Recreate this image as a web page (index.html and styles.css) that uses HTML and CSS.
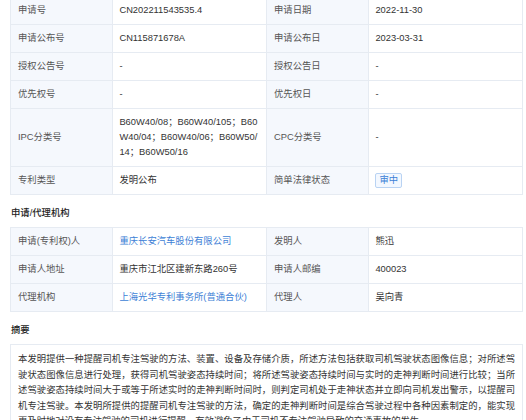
FILE: index.html
```html
<!DOCTYPE html>
<html lang="zh-CN">
<head>
<meta charset="utf-8">
<link rel="stylesheet" href="styles.css">
</head>
<body>
<div class="page">
  <table class="info">
    <colgroup><col class="c-label"><col class="c-value"><col class="c-label"><col class="c-value"></colgroup>
    <tr><th>申请号</th><td>CN202211543535.4</td><th>申请日期</th><td>2022-11-30</td></tr>
    <tr><th>申请公布号</th><td>CN115871678A</td><th>申请公布日</th><td>2023-03-31</td></tr>
    <tr><th>授权公告号</th><td>-</td><th>授权公告日</th><td>-</td></tr>
    <tr><th>优先权号</th><td>-</td><th>优先权日</th><td>-</td></tr>
    <tr><th>IPC分类号</th><td>B60W40/08；B60W40/105；B60W40/04；B60W40/06；B60W50/14；B60W50/16</td><th>CPC分类号</th><td>-</td></tr>
    <tr><th>专利类型</th><td>发明公布</td><th>简单法律状态</th><td><span class="badge">审中</span></td></tr>
  </table>

  <h3 class="section-title">申请/代理机构</h3>
  <table class="info">
    <colgroup><col class="c-label"><col class="c-value"><col class="c-label"><col class="c-value"></colgroup>
    <tr><th>申请(专利权)人</th><td><a class="link">重庆长安汽车股份有限公司</a></td><th>发明人</th><td>熊迅</td></tr>
    <tr><th>申请人地址</th><td>重庆市江北区建新东路260号</td><th>申请人邮编</th><td>400023</td></tr>
    <tr><th>代理机构</th><td><a class="link">上海光华专利事务所(普通合伙)</a></td><th>代理人</th><td>吴向青</td></tr>
  </table>

  <h3 class="section-title">摘要</h3>
  <div class="abstract">本发明提供一种提醒司机专注驾驶的方法、装置、设备及存储介质，所述方法包括获取司机驾驶状态图像信息；对所述驾驶状态图像信息进行处理，获得司机驾驶姿态持续时间；将所述驾驶姿态持续时间与实时的走神判断时间进行比较；当所述驾驶姿态持续时间大于或等于所述实时的走神判断时间时，则判定司机处于走神状态并立即向司机发出警示，以提醒司机专注驾驶。本发明所提供的提醒司机专注驾驶的方法，确定的走神判断时间是综合驾驶过程中各种因素制定的，能实现更及时地对没有专注驾驶的司机进行提醒，有效避免了由于司机不专注驾驶导致的交通事故的发生。</div>
</div>
</body>
</html>
```
FILE: styles.css
```css
html, body {
  margin: 0;
  padding: 0;
  background: #ffffff;
}
body {
  font-family: "Liberation Sans", "Noto Sans CJK SC", sans-serif;
  font-size: 9.33px;
  color: #333333;
  overflow: hidden;
}
.page {
  margin-top: -4px;
  margin-left: 10px;
  width: 513px;
}
.info {
  width: 100%;
  border-collapse: collapse;
  table-layout: fixed;
  border: 1px solid #e6ebf2;
}
.c-label { width: 20%; }
.c-value { width: 30%; }
.info th, .info td {
  border: 1px solid #e6ebf2;
  padding: 6px 7px;
  line-height: 15px;
  text-align: left;
  vertical-align: middle;
  word-break: break-all;
}
.info th {
  background: #f5f8fd;
  font-weight: normal;
  color: #555555;
}
.info td {
  color: #333333;
  padding-left: 6px;
}
.link {
  color: #3d7fd6;
  text-decoration: none;
}
.badge {
  display: inline-block;
  border: 1px solid #b9d3f3;
  background: #f3f8ff;
  color: #3d7fd6;
  padding: 0 3px;
  line-height: 13px;
  border-radius: 2px;
}
.section-title {
  margin: 11px 0 6px 1px;
  font-size: 9.33px;
  line-height: 15px;
  font-weight: 500;
  color: #222222;
}
.abstract {
  border: 1px solid #e6ebf2;
  padding: 7px 7px;
  line-height: 15.5px;
  color: #333333;
  text-align: justify;
}
```
